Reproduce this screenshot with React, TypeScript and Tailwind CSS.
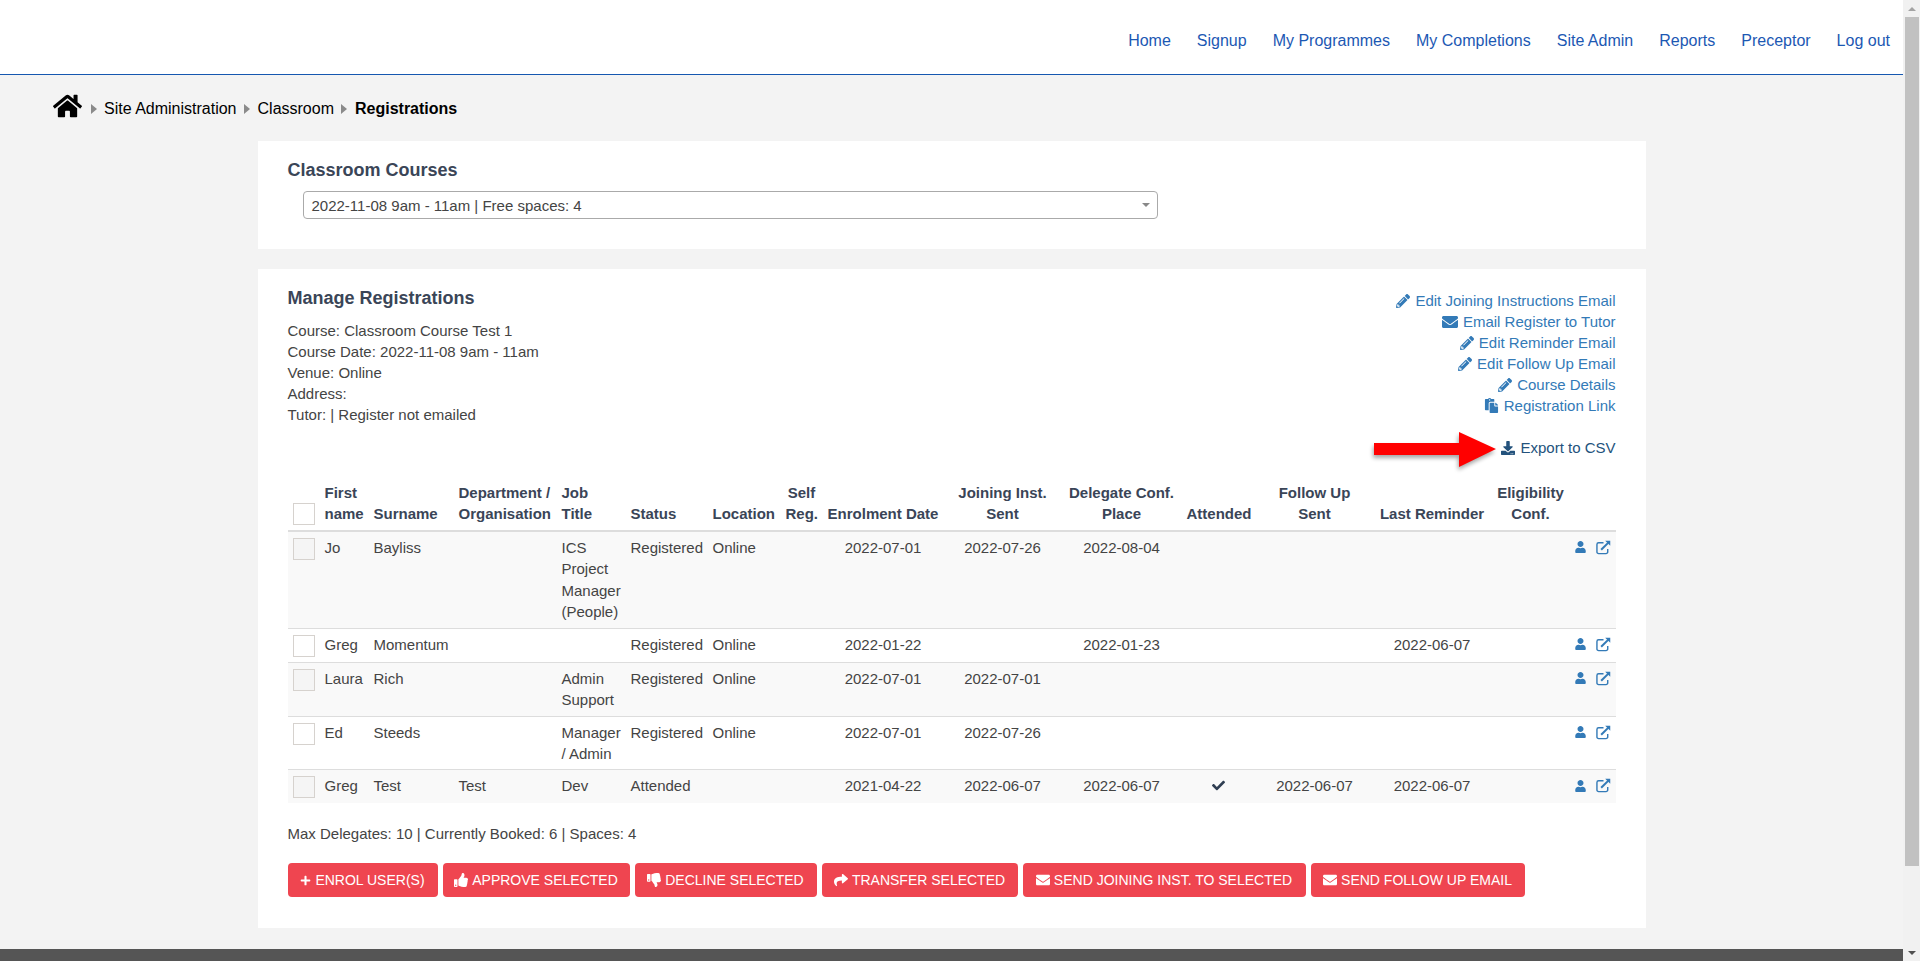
import type { ReactNode } from "react";
import {
  FaCheck,
  FaDownload,
  FaEnvelope,
  FaHome,
  FaPaste,
  FaPencilAlt,
  FaPlus,
  FaShare,
  FaThumbsDown,
  FaThumbsUp,
  FaUser,
} from "react-icons/fa";

const navItems = ["Home", "Signup", "My Programmes", "My Completions", "Site Admin", "Reports", "Preceptor", "Log out"];

const courseLines = [
  "Course: Classroom Course Test 1",
  "Course Date: 2022-11-08 9am - 11am",
  "Venue: Online",
  "Address:",
  "Tutor: | Register not emailed",
];

const courseLinks = [
  { label: "Edit Joining Instructions Email", icon: <FaPencilAlt className="h-[14px] w-[14px]" /> },
  { label: "Email Register to Tutor", icon: <FaEnvelope className="h-[16px] w-[16px]" /> },
  { label: "Edit Reminder Email", icon: <FaPencilAlt className="h-[14px] w-[14px]" /> },
  { label: "Edit Follow Up Email", icon: <FaPencilAlt className="h-[14px] w-[14px]" /> },
  { label: "Course Details", icon: <FaPencilAlt className="h-[14px] w-[14px]" /> },
  { label: "Registration Link", icon: <FaPaste className="h-[15px] w-[15px]" /> },
];

const columnWidths = [32, 49, 85, 103, 69, 82, 73, 42, 121, 118, 120, 73, 120, 115, 82, 44];

const rows = [
  { first: "Jo", last: "Bayliss", dept: "", job: "ICS Project Manager (People)", status: "Registered", place: "Online", enrol: "2022-07-01", joining: "2022-07-26", conf: "2022-08-04", attended: false, follow: "", reminder: "" },
  { first: "Greg", last: "Momentum", dept: "", job: "", status: "Registered", place: "Online", enrol: "2022-01-22", joining: "", conf: "2022-01-23", attended: false, follow: "", reminder: "2022-06-07" },
  { first: "Laura", last: "Rich", dept: "", job: "Admin Support", status: "Registered", place: "Online", enrol: "2022-07-01", joining: "2022-07-01", conf: "", attended: false, follow: "", reminder: "" },
  { first: "Ed", last: "Steeds", dept: "", job: "Manager / Admin", status: "Registered", place: "Online", enrol: "2022-07-01", joining: "2022-07-26", conf: "", attended: false, follow: "", reminder: "" },
  { first: "Greg", last: "Test", dept: "Test", job: "Dev", status: "Attended", place: "", enrol: "2021-04-22", joining: "2022-06-07", conf: "2022-06-07", attended: true, follow: "2022-06-07", reminder: "2022-06-07" },
];

function Crumb() {
  return (
    <svg viewBox="0 0 6 10" className="h-[10px] w-[6px] fill-[#8a8a8a]">
      <path d="M0 0l6 5-6 5z" />
    </svg>
  );
}

// Open square with an arrow leaving the corner, as in the row actions
function ExternalLink() {
  return (
    <svg viewBox="0 0 16 16" className="h-[15px] w-[15px]" fill="none" stroke="currentColor">
      <path d="M12.5 9.5v3.2a1.8 1.8 0 0 1-1.8 1.8H2.8A1.8 1.8 0 0 1 1 12.7V4.8A1.8 1.8 0 0 1 2.8 3H8" strokeWidth="1.5" />
      <path d="M5.5 10.5L14 2" strokeWidth="2.2" />
      <path d="M9.8 0.8h5.4v5.4z" fill="currentColor" stroke="none" />
    </svg>
  );
}

function RedArrow() {
  return (
    <svg width="122" height="44" viewBox="0 0 122 44" className="overflow-visible">
      <path d="M0 15h85V4l37 17-37 18V27H0z" fill="#000" opacity="0.35" transform="translate(-1 3)" style={{ filter: "blur(2px)" }} />
      <path d="M0 15h85V4l37 17-37 18V27H0z" fill="#ff0000" />
    </svg>
  );
}

function Checkbox({ striped }: { striped?: boolean }) {
  return (
    <div className={`h-[22px] w-[22px] border-[1.5px] border-[#d6d2ce] ${striped ? "bg-[#f5f5f5]" : "bg-white"}`} />
  );
}

function ActionButton({ icon, children, className }: { icon: ReactNode; children: ReactNode; className: string }) {
  return (
    <button
      type="button"
      className={`flex h-[34px] items-center justify-center gap-[4px] rounded-[4px] bg-[#ef4550] text-sm text-white ${className}`}
    >
      {icon}
      {children}
    </button>
  );
}

export default function App() {
  return (
    <div className="flex h-[961px] overflow-hidden bg-[#f3f3f3] font-['Liberation_Sans',Arial,sans-serif] text-[15px] leading-[21px] text-[#444]">
      <div className="flex min-w-0 flex-1 flex-col">
        <header className="flex h-[75px] shrink-0 items-start justify-end gap-[26px] border-b border-[#1557b0] bg-white pr-[13px] pt-[30px] text-base leading-[22px] text-[#1c58b3]">
          {navItems.map((item) => (
            <a key={item} href="#">
              {item}
            </a>
          ))}
        </header>

        <nav className="flex h-[66px] shrink-0 items-start pl-[53px] pt-[18px] text-base leading-[26px] text-black">
          <FaHome className="mr-[9px] h-[26px] w-[29px]" />
          <span className="mr-[7px] mt-[11px]">
            <Crumb />
          </span>
          <span className="mt-[3px]">Site Administration</span>
          <span className="mx-[7.5px] mt-[11px]">
            <Crumb />
          </span>
          <span className="mt-[3px]">Classroom</span>
          <span className="mx-[7.5px] mt-[11px]">
            <Crumb />
          </span>
          <span className="mt-[3px] font-bold">Registrations</span>
        </nav>

        <main className="mx-auto w-[1388px] shrink-0">
          <section className="h-[108px] bg-white pl-[30px] pt-[18px]">
            <h2 className="text-lg font-bold leading-[22px] text-[#3a4557]">Classroom Courses</h2>
            <div className="ml-[15px] mt-[10px] flex h-[28px] w-[855px] items-center justify-between rounded-[4px] border border-[#aaa] pl-[8px] pr-[7px]">
              <span>2022-11-08 9am - 11am | Free spaces: 4</span>
              <svg viewBox="0 0 8 4" className="h-[4px] w-[8px] fill-[#888]">
                <path d="M0 0h8L4 4z" />
              </svg>
            </div>
          </section>

          <section className="mt-[20px] h-[659px] bg-white pl-[30px] pr-[30px]">
            <div className="flex h-[189px] items-start justify-between pt-[18px]">
              <div>
                <h2 className="text-lg font-bold leading-[22px] text-[#3a4557]">Manage Registrations</h2>
                <div className="mt-[11px]">
                  {courseLines.map((line) => (
                    <p key={line}>{line}</p>
                  ))}
                </div>
              </div>
              <div className="pt-[3px] text-[#337ab7]">
                {courseLinks.map((link) => (
                  <a key={link.label} href="#" className="flex items-center justify-end gap-[5px]">
                    {link.icon}
                    {link.label}
                  </a>
                ))}
                <div className="relative mt-[21px] flex justify-end">
                  <div className="absolute right-[120px] top-[-9px] h-[44px] w-[122px]">
                    <RedArrow />
                  </div>
                  <a href="#" className="flex items-center gap-[5px] text-[#23527c]">
                    <FaDownload className="h-[14px] w-[14px]" />
                    Export to CSV
                  </a>
                </div>
              </div>
            </div>

            <table className="mt-[19px] w-[1328px] table-fixed border-collapse leading-[21.43px]">
              <colgroup>
                {columnWidths.map((width, i) => (
                  <col key={i} style={{ width }} />
                ))}
              </colgroup>
              <thead>
                <tr className="border-b-2 border-[#ddd] align-bottom font-bold text-[#3a4557] [&>th]:px-[5px] [&>th]:pb-[5px] [&>th]:pt-[5px]">
                  <th>
                    <Checkbox />
                  </th>
                  <th className="text-left">First<br />name</th>
                  <th className="text-left">Surname</th>
                  <th className="text-left">Department /<br />Organisation</th>
                  <th className="text-left">Job<br />Title</th>
                  <th className="text-left">Status</th>
                  <th className="text-left">Location</th>
                  <th className="text-center">Self<br />Reg.</th>
                  <th className="text-center">Enrolment Date</th>
                  <th className="text-center">Joining Inst.<br />Sent</th>
                  <th className="text-center">Delegate Conf.<br />Place</th>
                  <th className="text-center">Attended</th>
                  <th className="text-center">Follow Up<br />Sent</th>
                  <th className="text-center">Last Reminder</th>
                  <th className="text-center">Eligibility<br />Conf.</th>
                  <th />
                </tr>
              </thead>
              <tbody>
                {rows.map((row, i) => (
                  <tr
                    key={row.first + row.last}
                    className={`border-t border-[#ddd] align-top first:border-t-0 [&>td]:px-[5px] [&>td]:py-[5px] ${i % 2 === 0 ? "bg-[#f9f9f9]" : "bg-white"}`}
                  >
                    <td className="!pt-[6px]">
                      <Checkbox striped={i % 2 === 0} />
                    </td>
                    <td>{row.first}</td>
                    <td>{row.last}</td>
                    <td>{row.dept}</td>
                    <td>{row.job}</td>
                    <td>{row.status}</td>
                    <td>{row.place}</td>
                    <td />
                    <td className="text-center">{row.enrol}</td>
                    <td className="text-center">{row.joining}</td>
                    <td className="text-center">{row.conf}</td>
                    <td className="text-center">
                      {row.attended && <FaCheck className="mx-auto mt-[4px] h-[13px] w-[13px] text-[#2f3e52]" />}
                    </td>
                    <td className="text-center">{row.follow}</td>
                    <td className="text-center">{row.reminder}</td>
                    <td />
                    <td className="!px-0">
                      <div className="flex h-[21px] items-center gap-[10px] text-[#337ab7]">
                        <FaUser className="ml-[3px] h-[12px] w-[11px]" />
                        <ExternalLink />
                      </div>
                    </td>
                  </tr>
                ))}
              </tbody>
            </table>

            <p className="mt-[20px]">Max Delegates: 10 | Currently Booked: 6 | Spaces: 4</p>

            <div className="mt-[19px] flex gap-[5px]">
              <ActionButton icon={<FaPlus className="h-[11px] w-[11px]" />} className="w-[150px]">ENROL USER(S)</ActionButton>
              <ActionButton icon={<FaThumbsUp className="h-[14px] w-[14px]" />} className="w-[187px]">APPROVE SELECTED</ActionButton>
              <ActionButton icon={<FaThumbsDown className="h-[14px] w-[14px]" />} className="w-[182px]">DECLINE SELECTED</ActionButton>
              <ActionButton icon={<FaShare className="h-[14px] w-[14px]" />} className="w-[196px]">TRANSFER SELECTED</ActionButton>
              <ActionButton icon={<FaEnvelope className="h-[14px] w-[14px]" />} className="w-[283px]">SEND JOINING INST. TO SELECTED</ActionButton>
              <ActionButton icon={<FaEnvelope className="h-[14px] w-[14px]" />} className="w-[214px]">SEND FOLLOW UP EMAIL</ActionButton>
            </div>
          </section>
        </main>

        <footer className="mt-[21px] h-[40px] shrink-0 bg-[#555]" />
      </div>

      {/* Browser scrollbar */}
      <div className="flex w-[17px] shrink-0 flex-col items-center justify-between bg-[#f1f1f1]">
        <div className="flex w-full flex-col items-center">
          <div className="flex h-[17px] items-center">
            <svg viewBox="0 0 8 4" className="h-[4px] w-[8px] fill-[#a3a3a3]">
              <path d="M4 0l4 4H0z" />
            </svg>
          </div>
          <div className="h-[849px] w-[14px] bg-[#c1c1c1]" />
        </div>
        <div className="flex h-[17px] items-center">
          <svg viewBox="0 0 8 4" className="h-[4px] w-[8px] fill-[#505050]">
            <path d="M0 0h8L4 4z" />
          </svg>
        </div>
      </div>
    </div>
  );
}
